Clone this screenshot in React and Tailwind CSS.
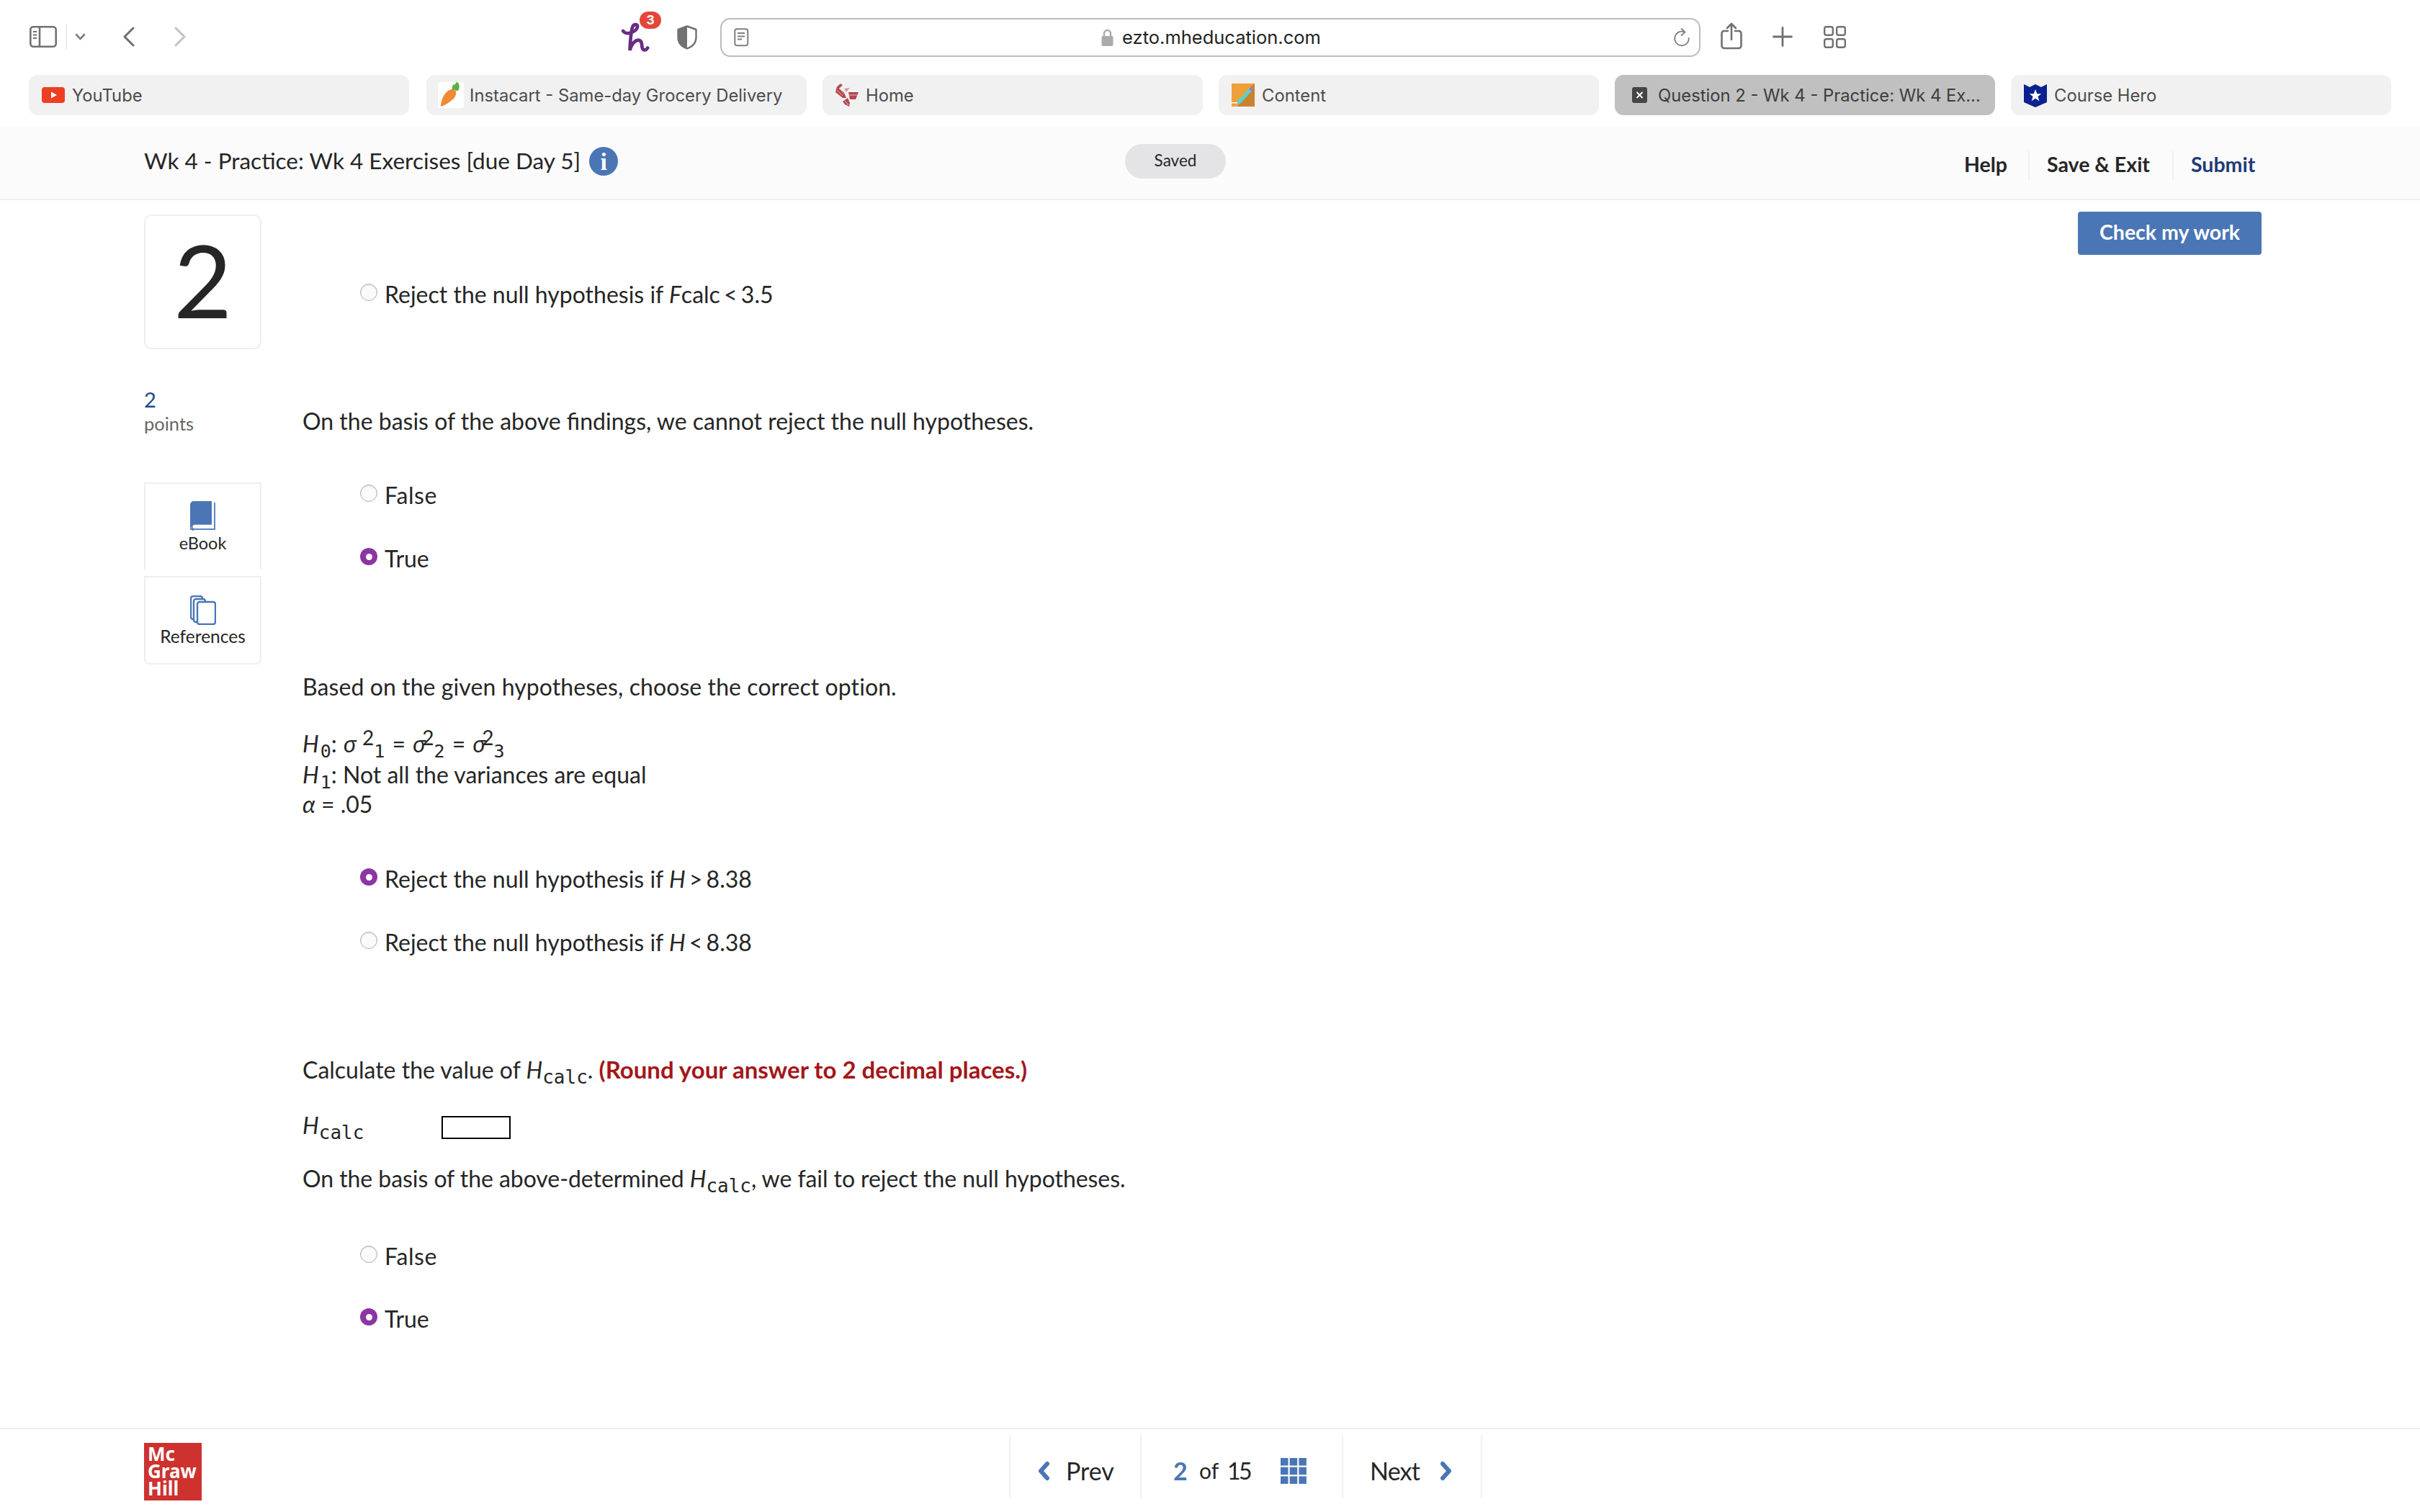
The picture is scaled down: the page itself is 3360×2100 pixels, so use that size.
import React from "react";

const Chevron = ({ d, color = "#4a76b5", w = 6, cls = "" }) => (
  <svg width="18" height="28" viewBox="0 0 18 28" className={cls} fill="none">
    <path d={d} stroke={color} strokeWidth={w} strokeLinecap="round" strokeLinejoin="round" />
  </svg>
);

const Tab = ({ icon, label, active }) => (
  <div
    className={`h-[56px] w-[528px] rounded-[12px] flex items-center pl-[18px] gap-[10px] ${active ? "bg-[#c0c0c0] text-[#3d3d3d]" : "bg-[#f1f1f1] text-[#4c4c4c]"}`}
  >
    <div className="w-[32px] h-[32px] flex items-center justify-center shrink-0">{icon}</div>
    <span className="[font-family:Inter,sans-serif] text-[23.8px] leading-[32px] whitespace-nowrap pt-[1px]">{label}</span>
  </div>
);

const Radio = ({ checked }) =>
  checked ? (
    <span className="w-[24px] h-[24px] rounded-full bg-[#8c35a3] flex items-center justify-center shrink-0 mt-[5px]">
      <span className="w-[9px] h-[9px] rounded-full bg-white block" />
    </span>
  ) : (
    <span className="w-[24px] h-[24px] rounded-full bg-[#fbfbfb] border border-[#b0b0b0] shadow-[inset_0_1px_2px_rgba(0,0,0,0.15)] shrink-0 block mt-[5px]" />
  );

const Option = ({ checked, mt, children }) => (
  <div className={`flex gap-[11px] pl-[80px] h-[40px] leading-[40px] ${mt}`}>
    <Radio checked={checked} />
    <span className="-ml-[1px]">{children}</span>
  </div>
);

const Calc = () => (
  <span className="[font-family:'DejaVu_Sans_Mono',monospace] text-[26px] relative top-[7px]">calc</span>
);
const H = () => <i>H</i>;
const Sub = ({ children }) => (
  <span className="[font-family:'DejaVu_Sans_Mono',monospace] text-[25px] relative top-[7px]">{children}</span>
);
const Sup = ({ children, cls = "" }) => <span className={`text-[28px] relative top-[-10px] ${cls}`}>{children}</span>;
const Op = ({ children }) => <span className="[word-spacing:-3px]"> {children} </span>;

export default function App() {
  return (
    <div className="w-[3360px] h-[2100px] bg-white flex flex-col overflow-hidden [font-family:Lato,sans-serif] text-[#262626]">
      {/* browser toolbar */}
      <div className="h-[104px] shrink-0 flex items-start">
        <div className="flex items-center h-[104px] pl-[41px] pb-[2px]">
          <svg width="38" height="30" viewBox="0 0 38 30" fill="none" stroke="#717171" strokeWidth="2.6">
            <rect x="1.3" y="1.3" width="35.4" height="27.4" rx="4" />
            <path d="M14 1.3v27.4" />
            <path d="M5 8h5M5 12.5h5M5 17h5" strokeWidth="2" />
          </svg>
          <div className="w-[2px] h-[36px] bg-[#ededed] ml-[12px]" />
          <svg width="15" height="10" viewBox="0 0 15 10" fill="none" className="ml-[11px]">
            <path d="M2 2l5.5 6L13 2" stroke="#808080" strokeWidth="2.6" strokeLinecap="round" strokeLinejoin="round" />
          </svg>
          <Chevron d="M15 2L3 14l12 12" color="#707070" w={3} cls="ml-[51px]" />
          <Chevron d="M3 2l12 12L3 26" color="#c2c2c2" w={3} cls="ml-[53px]" />
        </div>
        <div className="relative ml-[605px] mt-[33px] w-[35px] h-[38px]">
          <svg width="42" height="44" viewBox="60 90 125 130" fill="none" className="-ml-[3px] -mt-[3px]">
            <path
              d="M72 128C85 150 130 130 132 110C132 98 115 98 110 115C103 140 102 180 100 208C108 180 125 160 142 168C155 175 145 195 155 205C162 210 170 205 174 198"
              stroke="#6a2c82"
              strokeWidth="14"
              strokeLinecap="round"
            />
          </svg>
          <span className="absolute left-[24px] top-[-17px] w-[30px] h-[24px] rounded-full bg-[#e5463a] text-white text-[18px] font-bold leading-[24px] text-center [font-family:Inter,sans-serif]">
            3
          </span>
        </div>
        <svg width="28" height="34" viewBox="0 0 28 34" fill="none" className="ml-[41px] mt-[35px]">
          <path d="M14 1.5L26.5 6v11c0 8-6 13-12.500 15.500C7.500 30 1.500 25 1.500 17V6z" stroke="#717171" strokeWidth="2.4" strokeLinejoin="round" />
          <path d="M14 1.500L1.500 6v11c0 8 6 13 12.500 15.500z" fill="#717171" />
        </svg>
        {/* address bar */}
        <div className="ml-[32px] mt-[25px] w-[1361px] h-[54px] rounded-[14px] border-2 border-[#bcbcbc] flex items-center relative">
          <svg width="21" height="26" viewBox="0 0 21 26" fill="none" className="ml-[17px]">
            <rect x="1.300" y="1.300" width="18" height="23" rx="3" stroke="#808080" strokeWidth="2" />
            <path d="M5 7h10M5 11.500h10M5 15.500h6" stroke="#808080" strokeWidth="2" />
          </svg>
          <div className="flex-1 flex items-center justify-center gap-[12px]">
            <svg width="17" height="24" viewBox="0 0 17 24" fill="none">
              <path d="M4 11V6.500a4.500 4.500 0 0 1 9 0V11" stroke="#aaaaaa" strokeWidth="2.500" />
              <rect x="0.500" y="10" width="16" height="14" rx="2" fill="#aaaaaa" />
            </svg>
            <span className="[font-family:Inter,sans-serif] text-[25.500px] text-[#222]">ezto.mheducation.com</span>
          </div>
          <svg width="24" height="27" viewBox="0 0 24 27" fill="none" className="mr-[12px]">
            <path d="M16 5.500A9.800 9.800 0 1 0 21.800 14" stroke="#808080" strokeWidth="1.800" strokeLinecap="round" />
            <path d="M11.500 1l5 4.500-5 4.500" stroke="#808080" strokeWidth="1.800" strokeLinecap="round" strokeLinejoin="round" />
          </svg>
        </div>
        <svg width="30" height="38" viewBox="0 0 30 38" fill="none" className="ml-[28px] mt-[31px]" stroke="#717171" strokeWidth="2.600" strokeLinecap="round" strokeLinejoin="round">
          <path d="M10 12H5a3.500 3.500 0 0 0-3.500 3.500v17A3.500 3.500 0 0 0 5 36h20a3.500 3.500 0 0 0 3.500-3.500v-17A3.500 3.500 0 0 0 25 12h-5" />
          <path d="M15 24V2M9 8l6-6 6 6" />
        </svg>
        <svg width="28" height="28" viewBox="0 0 28 28" fill="none" className="ml-[42px] mt-[37px]">
          <path d="M14 1.500v25M1.500 14h25" stroke="#717171" strokeWidth="2.800" strokeLinecap="round" />
        </svg>
        <svg width="31" height="31" viewBox="0 0 31 31" fill="none" className="ml-[43px] mt-[36px]" stroke="#717171" strokeWidth="2.400">
          <rect x="1.200" y="1.200" width="11.600" height="11.600" rx="2.500" />
          <rect x="18.200" y="1.200" width="11.600" height="11.600" rx="2.500" />
          <rect x="1.200" y="18.200" width="11.600" height="11.600" rx="2.500" />
          <rect x="18.200" y="18.200" width="11.600" height="11.600" rx="2.500" />
        </svg>
      </div>

      {/* favorites tabs */}
      <div className="h-[72px] shrink-0 flex gap-[22px] pl-[40px]">
        <div className="mr-[2px]">
          <Tab
            label="YouTube"
            icon={
              <svg width="32" height="22" viewBox="0 0 32 22">
                <rect width="32" height="22" rx="4" fill="#ee3f22" />
                <path d="M13 6.500l8 4.500-8 4.500z" fill="#fff" />
              </svg>
            }
          />
        </div>
        <Tab
          label="Instacart - Same-day Grocery Delivery"
          icon={
            <svg width="36" height="36" viewBox="0 0 36 36" className="shrink-0">
              <rect width="36" height="36" rx="3" fill="#ffffff" />
              <path d="M4 34C4 26 8 17 13 13c5-4 11-4 12 1 1 6-4 10-8 13-4 3-9 6-13 7z" fill="#f08a35" />
              <path d="M20 11c-1-3 0-6 2-8l2 1c-1 3-1 5-1 7zM24 12c-2-4-1-9 2-12 4 1 5 7 2 12z" fill="#5fae43" />
            </svg>
          }
        />
        <Tab
          label="Home"
          icon={
            <svg width="32" height="32" viewBox="0 0 32 32">
              <g fill="#b5474f">
                <path d="M6.700 0.300L10 2 5 7l6.700 5L15 20h-5L0 12l1.700-7z" />
                <path d="M18 12h14l-2 5-2 5h-8z" />
                <path d="M10 25l7-5 3 7-1 5-6-3z" />
                <path d="M12 7l8-1-5 6z" opacity="0.5" />
              </g>
              <path d="M2 9l8 8M5 6l7 8M19 16h11M13 24l5 6" stroke="#f1f1f1" strokeWidth="1" opacity="0.7" />
            </svg>
          }
        />
        <Tab
          label="Content"
          icon={
            <svg width="32" height="32" viewBox="0 0 32 32">
              <rect width="32" height="32" fill="#f0a038" />
              <path d="M32 0v32H8L27 4z" fill="#c9832f" />
              <path d="M26 5l4 3-18 20-5 1 1-5z" fill="#5fd0c5" />
              <path d="M26 5l4 3-2 3-4-3z" fill="#a86ad8" />
              <rect y="26" width="8" height="1.500" fill="#fff" />
            </svg>
          }
        />
        <Tab
          active
          label="Question 2 - Wk 4 - Practice: Wk 4 Ex..."
          icon={
            <svg width="21" height="22" viewBox="0 0 21 22">
              <rect width="21" height="22" rx="3" fill="#454545" />
              <path d="M6.500 7l8 8M14.500 7l-8 8" stroke="#fff" strokeWidth="1.800" />
            </svg>
          }
        />
        <Tab
          label="Course Hero"
          icon={
            <svg width="32" height="33" viewBox="0 0 32 33">
              <path d="M0 1l8 4 8-4 8 4 8-4v25l-16 7-16-7z" fill="#0b2191" />
              <path d="M16 8l2.300 6.200h6l-4.800 3.800 1.800 6.300L16 20.700l-5.300 3.600 1.800-6.300-4.800-3.800h6z" fill="#fff" />
            </svg>
          }
        />
      </div>

      {/* test header */}
      <div className="h-[102px] shrink-0 bg-[#fbfbfb] border-b-2 border-[#f0f0f0] flex items-start pl-[200px]">
        <div className="flex items-center mt-[27px] h-[40px] w-[1362px]">
          <span className="text-[31.500px] leading-[40px] whitespace-nowrap">Wk 4 - Practice: Wk 4 Exercises [due Day 5]</span>
          <span className="ml-[12px] mt-[2px] w-[40px] h-[40px] rounded-full bg-[#4a76b5] text-white flex items-center justify-center text-[34px] font-bold [font-family:'Liberation_Serif',serif]">
            i
          </span>
        </div>
        <div className="mt-[24px] w-[140px] h-[48px] rounded-full bg-[#e4e3e6] text-[22.500px] flex items-center justify-center pb-[3px]">
          Saved
        </div>
        <div className="ml-[1027px] mt-[34px] flex items-center h-[40px] text-[28.500px] font-bold whitespace-nowrap">
          <span className="pr-[29px] h-[40px] leading-[36px] -ml-[2px]">Help</span>
          <span className="border-l-2 border-[#efefef] pl-[24px] pr-[31px] h-[40px] leading-[36px]">Save &amp; Exit</span>
          <span className="border-l-2 border-[#efefef] pl-[24px] h-[40px] leading-[36px] text-[#1e3a78]">Submit</span>
        </div>
      </div>

      {/* main */}
      <div className="flex-1 flex pl-[200px] pr-[220px] text-[32px]">
        <div className="w-[163px] shrink-0 mr-[57px]">
          <div className="mt-[20px] h-[187px] rounded-[10px] border-2 border-[#eeeeee] flex items-center justify-center text-[140px] leading-none font-normal pb-[8px]">
            2
          </div>
          <div className="mt-[53px] text-[#1e4a8c] text-[29px] leading-[34px]">2</div>
          <div className="text-[#666] text-[25.500px] leading-[32px]">points</div>
          <div className="mt-[66px] h-[121px] border-2 border-b-0 border-[#eeeeee] flex flex-col items-center pt-[24px]">
            <svg width="36" height="41" viewBox="0 0 36 41" fill="none">
              <path d="M0 5a5 5 0 0 1 5-5h25v32H6a6 6 0 0 0-6 3z" fill="#4a76b5" />
              <path d="M34 2v37H6a3.500 3.500 0 0 1 0-7" stroke="#5d86c0" strokeWidth="2" />
              <path d="M1 36a5 5 0 0 1 5-4h24" stroke="#4a76b5" strokeWidth="1.500" />
              <path d="M0 5v31c0 2 2 4 5 4" stroke="#4a76b5" strokeWidth="2" />
            </svg>
            <span className="text-[23.500px] leading-[26px] mt-[4px]">eBook</span>
          </div>
          <div className="mt-[9px] h-[123px] rounded-b-[8px] border-2 border-[#eeeeee] flex flex-col items-center pt-[25px]">
            <svg width="36" height="41" viewBox="0 0 36 41" fill="none" stroke="#4a76b5" strokeWidth="2.400">
              <path d="M6 33H4a3 3 0 0 1-3-3V4a3 3 0 0 1 3-3h10a3 3 0 0 1 3 3v1" />
              <path d="M11 37H8a3 3 0 0 1-3-3V8a3 3 0 0 1 3-3h10a3 3 0 0 1 3 3v1" />
              <rect x="10" y="9" width="25" height="31" rx="3" />
            </svg>
            <span className="text-[24.500px] leading-[26px] mt-[3px] whitespace-nowrap">References</span>
          </div>
        </div>

        <div className="flex-1 leading-[40px]">
          <Option mt="mt-[111px]">
            Reject the null hypothesis if <i>F</i>calc
            <Op>&lt;</Op>3.5
          </Option>
          <div className="mt-[136px] h-[40px]">On the basis of the above findings, we cannot reject the null hypotheses.</div>
          <Option mt="mt-[63px]">
            <span className="tracking-[0.6px]">False</span>
          </Option>
          <Option mt="mt-[48px]" checked>
            True
          </Option>
          <div className="mt-[138px] h-[40px] tracking-[0.08px]">Based on the given hypotheses, choose the correct option.</div>
          <div className="mt-[39px] h-[43px] whitespace-nowrap">
            <H />
            <span className="ml-[2px]">
              <Sub>0</Sub>
            </span>
            : <i className="ml-[1px]">σ</i> <Sup>2</Sup>
            <Sub>1</Sub>
            <span className="mx-[2px]"> = </span>
            <i>σ</i>
            <Sup cls="-ml-[5px]">2</Sup>
            <Sub>2</Sub>
            <span className="mx-[2px]"> = </span>
            <i>σ</i>
            <Sup cls="-ml-[5px]">2</Sup>
            <Sub>3</Sub>
          </div>
          <div className="h-[41px] whitespace-nowrap">
            <H />
            <span className="ml-[2px]">
              <Sub>1</Sub>
            </span>
            : Not all the variances are equal
          </div>
          <div className="h-[40px]">
            <i>α</i> = .05
          </div>
          <Option mt="mt-[64px]" checked>
            Reject the null hypothesis if <H />
            <Op>&gt;</Op>8.38
          </Option>
          <Option mt="mt-[48px]">
            Reject the null hypothesis if <H />
            <Op>&lt;</Op>8.38
          </Option>
          <div className="mt-[136px] h-[40px] whitespace-nowrap">
            Calculate the value of <H />
            <Calc />. <b className="text-[#a3171b] text-[33px]">(Round your answer to 2 decimal places.)</b>
          </div>
          <div className="mt-[41px] h-[40px] flex items-center">
            <span className="w-[193px] whitespace-nowrap -mt-[4px]">
              <H />
              <Calc />
            </span>
            <div className="w-[96px] h-[32px] border-2 border-black" />
          </div>
          <div className="mt-[31px] h-[40px] whitespace-nowrap tracking-[-0.06px]">
            On the basis of the above-determined <H />
            <Calc />, we fail to reject the null hypotheses.
          </div>
          <Option mt="mt-[68px]">
            <span className="tracking-[0.6px]">False</span>
          </Option>
          <Option mt="mt-[47px]" checked>
            True
          </Option>
        </div>

        <div className="shrink-0">
          <button className="mt-[16px] w-[255px] h-[60px] rounded-[4px] bg-[#4a76b5] text-white text-[28.500px] font-bold pb-[3px]">
            Check my work
          </button>
        </div>
      </div>

      {/* footer */}
      <div className="h-[117px] shrink-0 border-t-2 border-[#f0f0f0] flex items-start pl-[200px]">
        <div className="mt-[19px] w-[80px] h-[80px] bg-[#cd322e] text-white font-bold text-[26px] leading-[24px] pl-[5px] pt-[3px] [font-family:'Noto_Sans',sans-serif]">
          Mc
          <br />
          Graw
          <br />
          Hill
        </div>
        <div className="ml-[1121px] mt-[8px] h-[88px] flex text-[34px]">
          <div className="w-[184px] border-x-2 border-[#f0f0f0] flex items-center pl-[37px] gap-[22px] pt-[11px]">
            <Chevron d="M14 4L5 14l9 10" />
            <span>Prev</span>
          </div>
          <div className="w-[278px] flex items-center pl-[44px] pt-[11px]">
            <b className="text-[#4a76b5] w-[36px]">2</b>
            <span className="text-[30px] w-[39px]">of</span>
            <span className="w-[74px] text-[32px] tracking-[-2.500px]">15</span>
            <svg width="36" height="36" viewBox="0 0 36 36" fill="#4a76b5">
              <rect x="0" y="0" width="10.500" height="10.500" />
              <rect x="12.700" y="0" width="10.500" height="10.500" />
              <rect x="25.400" y="0" width="10.500" height="10.500" />
              <rect x="0" y="12.700" width="10.500" height="10.500" />
              <rect x="12.700" y="12.700" width="10.500" height="10.500" />
              <rect x="25.400" y="12.700" width="10.500" height="10.500" />
              <rect x="0" y="25.400" width="10.500" height="10.500" />
              <rect x="12.700" y="25.400" width="10.500" height="10.500" />
              <rect x="25.400" y="25.400" width="10.500" height="10.500" />
            </svg>
          </div>
          <div className="w-[195px] border-x-2 border-[#f0f0f0] flex items-center pl-[37px] gap-[28px] pt-[11px]">
            <span className="tracking-[-0.800px]">Next</span>
            <Chevron d="M4 4l9 10-9 10" />
          </div>
        </div>
      </div>
    </div>
  );
}
